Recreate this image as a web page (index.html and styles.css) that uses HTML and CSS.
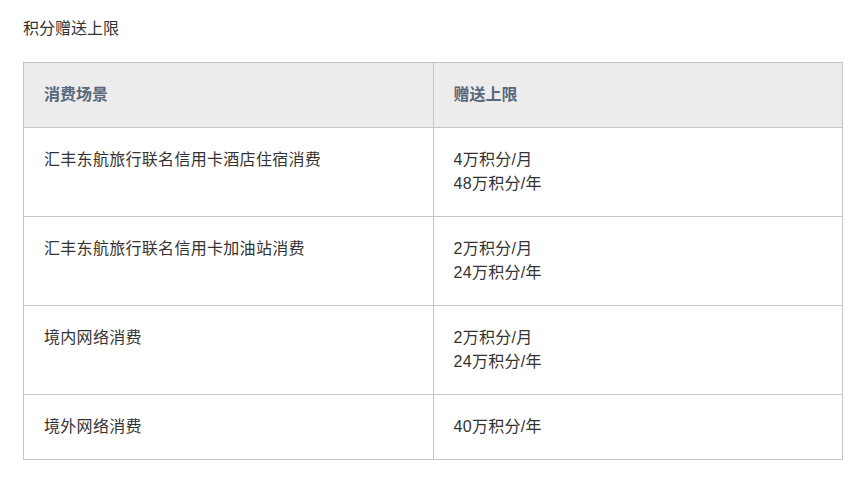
FILE: index.html
```html
<!DOCTYPE html>
<html lang="zh-CN">
<head>
<meta charset="utf-8">
<title>积分赠送上限</title>
<link rel="stylesheet" href="styles.css">
</head>
<body>
<div class="page">
  <p class="title">积分赠送上限</p>
  <table class="limits">
    <thead>
      <tr><th>消费场景</th><th>赠送上限</th></tr>
    </thead>
    <tbody>
      <tr><td>汇丰东航旅行联名信用卡酒店住宿消费</td><td>4万积分/月<br>48万积分/年</td></tr>
      <tr><td>汇丰东航旅行联名信用卡加油站消费</td><td>2万积分/月<br>24万积分/年</td></tr>
      <tr><td>境内网络消费</td><td>2万积分/月<br>24万积分/年</td></tr>
      <tr><td>境外网络消费</td><td>40万积分/年</td></tr>
    </tbody>
  </table>
</div>
</body>
</html>
```
FILE: styles.css
```css
html, body {
  margin: 0;
  padding: 0;
  background: #fff;
}
body {
  font-family: "Liberation Sans", "Noto Sans CJK SC", sans-serif;
  font-size: 16px;
  line-height: 24px;
  color: #333;
}
.page {
  padding: 17px 16px 0 23px;
}
.title {
  margin: 0 0 21px 0;
  color: #333;
}
.limits {
  width: 820px;
  border-collapse: collapse;
  table-layout: fixed;
}
.limits th,
.limits td {
  border: 1px solid #c6c6c6;
  padding: 20px 20px;
  text-align: left;
  vertical-align: top;
  font-size: 16px;
  line-height: 24px;
}
.limits th {
  background: #ececec;
  color: #56687a;
  font-weight: 700;
}
.limits td {
  color: #333;
  letter-spacing: 0.3px;
}
```
